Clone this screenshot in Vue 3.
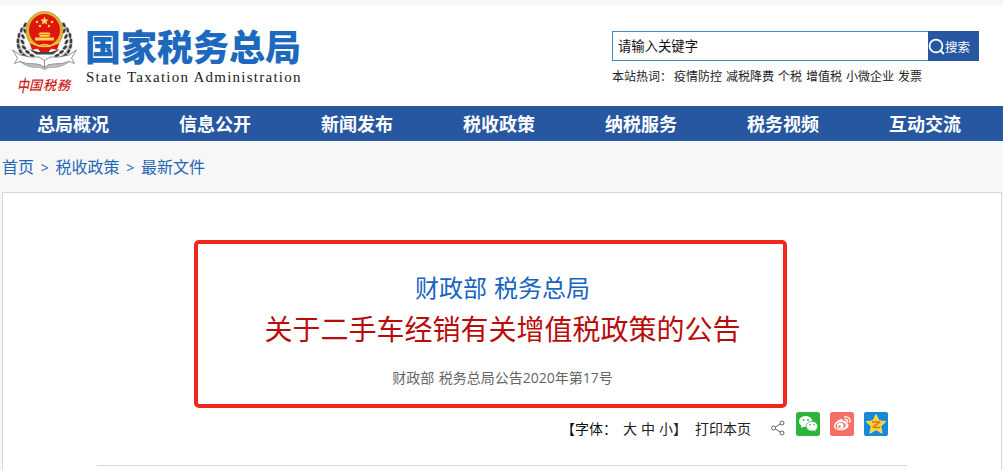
<script setup>
const hotWords = ['疫情防控', '减税降费', '个税', '增值税', '小微企业', '发票']
const navItems = ['总局概况', '信息公开', '新闻发布', '税收政策', '纳税服务', '税务视频', '互动交流']
const crumbs = ['首页', '税收政策', '最新文件']
// one side of the emblem's wheat wreath: x, y, rotation
const grains = [
  [16, 17, 25], [12.5, 22, 15], [10, 27.5, 5], [9, 33, 0], [9.5, 38.5, -15], [11.5, 43.5, -30], [15, 47.5, -45],
  [16, 23, -25], [14, 28.5, -30], [13.5, 34, -35], [15, 39.500, -45], [18.5, 44, -55], [23, 47.5, -65],
]
const sides = ['', 'translate(71 0) scale(-1 1)']
</script>

<template>
  <div class="page">
    <header class="header">
      <div class="brand">
        <svg class="emblem" viewBox="0 0 72 66" width="72" height="66">
          <g v-for="side in sides" :key="side" :transform="side">
            <path d="M17 16C7 27 8 41 18 48q6 5 15 6" fill="none" stroke="#666" stroke-width="1" />
            <ellipse v-for="(g, i) in grains" :key="i" rx="1.7" ry="3" fill="#3a3a3a" stroke="#eee" stroke-width=".6"
              :transform="`translate(${g[0]} ${g[1]}) rotate(${g[2]})`" />
            <path d="M3.500 42l7.500 5q11 3 19 2l5.500 3.500v7q-4-4-10-3.500-8 .5-15-2.500l-5 2 3-5.500z" fill="#fff" stroke="#777" stroke-width=".8" />
            <path d="M10.500 53.500q8 3 15 2.500 6-.5 10 3.500v2q-5-3-11-2-8-1-14-6z" fill="#bdbdbd" stroke="#888" stroke-width=".5" />
          </g>
          <ellipse cx="35.500" cy="23" rx="18.500" ry="19.500" fill="#dfb42c" stroke="#a97f22" stroke-width=".6" />
          <ellipse cx="35.500" cy="22" rx="15.500" ry="16" fill="#df1610" />
          <path d="M35.500 8.500l1.200 2.900 3.100.2-2.400 2 .8 3-2.700-1.600-2.700 1.600.8-3-2.400-2 3.100-.2z" fill="#ffe05a" />
          <g fill="#ffd84e">
            <circle cx="28" cy="14" r="1.200" /><circle cx="43" cy="14" r="1.200" />
            <circle cx="31" cy="18" r="1.200" /><circle cx="40" cy="18" r="1.200" />
            <path d="M31 24.500h9l2 2H29zM30.500 27h10v1.800h-10zM26 29.500h19v3H26z" />
          </g>
          <path d="M20 33q8 6 15.500 3Q43 39 51 33l-3 9-6-1.500-2.500 4h-8l-2.500-4-6 1.500z" fill="#df1610" />
          <path d="M20 33.500q15.500 10 31 0M29.500 38.500q6-4 12 0" fill="none" stroke="#f0c83a" stroke-width="1.600" />
          <path d="M20 41l7 5.500h17l7-5.500-9 3H29z" fill="#444" />
        </svg>
        <div class="script"><span>中</span><span>国</span><span>税</span><span>務</span></div>
      </div>
      <div class="names">
        <div class="name">国家税务总局</div>
        <div class="english">State Taxation Administration</div>
      </div>
      <div class="search">
        <div class="search-bar">
          <div class="search-input">请输入关键字</div>
          <div class="search-button">
            <svg width="17" height="18" viewBox="0 0 17 18"><circle cx="8" cy="9" r="6.400" fill="none" stroke="#fff" stroke-width="1.700" /><path d="M12.500 13.600l3.400 3.400" stroke="#fff" stroke-width="2" /></svg>
            <span>搜索</span>
          </div>
        </div>
        <div class="hot"><span class="hot-label">本站热词：</span><span v-for="w in hotWords" :key="w">{{ w }}</span></div>
      </div>
    </header>
    <nav class="nav"><span v-for="n in navItems" :key="n">{{ n }}</span></nav>
    <div class="crumbs">
      <template v-for="(c, i) in crumbs" :key="c"><span v-if="i" class="sep">&gt;</span><span>{{ c }}</span></template>
    </div>
    <main class="article">
      <div class="frame">
        <div class="issuer"><span>财政部</span><span>税务总局</span></div>
        <h1 class="title">关于二手车经销有关增值税政策的公告</h1>
        <div class="number">财政部 税务总局公告2020年第17号</div>
      </div>
      <div class="tools">
        <span class="label">【字体：</span>
        <span class="sizes"><span>大</span><span>中</span><span>小</span></span><span class="close">】</span>
        <span class="print">打印本页</span>
        <svg class="share" width="14" height="16" viewBox="0 0 14 16" fill="none" stroke="#666" stroke-width="1"><circle cx="2.600" cy="8" r="2" /><circle cx="11" cy="3" r="2" /><circle cx="11" cy="13" r="2" /><path d="M4.400 7l5-3M4.400 9l5 3" /></svg>
        <svg class="social" width="24" height="24" viewBox="0 0 24 24">
          <rect width="24" height="24" rx="2.500" fill="#2cb53b" />
          <path d="M9.700 4C5.900 4 3 6.400 3 9.500c0 1.800 1 3.300 2.500 4.300L5 16l2.500-1.300 2.200.3c3.700 0 6.600-2.400 6.600-5.500S13.400 4 9.700 4z" fill="#fff" />
          <path d="M16 9.300c-3.300 0-5.800 2.200-5.800 4.900s2.500 4.900 5.800 4.900l1.900-.3 2.200 1.200-.5-2c1.300-.9 2.100-2.200 2.100-3.800 0-2.700-2.500-4.900-5.700-4.900z" fill="#fff" stroke="#2cb53b" stroke-width=".7" />
          <g fill="#2cb53b"><circle cx="7.500" cy="8" r=".9" /><circle cx="12" cy="8" r=".9" /><circle cx="14.200" cy="12.800" r=".8" /><circle cx="18" cy="12.800" r=".8" /></g>
        </svg>
        <svg class="social" width="24" height="24" viewBox="0 0 24 24">
          <rect width="24" height="24" rx="2.500" fill="#f56f64" />
          <path d="M10.500 7.200c1.600-.6 2.800 0 2.300 2 2.500-.9 4.400-.3 3.700 1.700 3.100 1 2.400 4.200-.2 5.900-3.300 2.200-8.700 2-11.300-.2-3-2.600.9-7.900 5.500-9.400z" fill="#fff" />
          <ellipse cx="10.600" cy="13.700" rx="5.200" ry="3.400" fill="#f56f64" transform="rotate(-8 10.600 13.700)" />
          <ellipse cx="10.300" cy="13.900" rx="3.400" ry="2.800" fill="#fff" /><circle cx="9.500" cy="14.400" r="1.200" fill="#f56f64" />
          <path d="M14.600 5c3.900-.8 6.400 2.100 5.300 5.400M15 7.400c1.900-.3 3.100.9 2.600 2.600" fill="none" stroke="#fff" stroke-width="1.300" stroke-linecap="round" />
        </svg>
        <svg class="social" width="24" height="24" viewBox="0 0 24 24">
          <rect width="24" height="24" rx="2" fill="#1689d8" />
          <path d="M12 2.500l2.900 6.300 6.900.8-5.100 4.700 1.400 6.900-6.100-3.500-6.100 3.500 1.400-6.900-5.100-4.700 6.900-.8z" fill="#ffd02f" stroke="#ffdf58" stroke-width="1" stroke-linejoin="round" />
          <path d="M8 10.300q4-.8 7.700-.2L9.200 15.200q3.500.6 7 0" fill="none" stroke="#d37a12" stroke-width="1.500" stroke-linejoin="round" />
        </svg>
      </div>
      <div class="rule"></div>
    </main>
  </div>
</template>

<style>
body { background: #f7f7f7; overflow: hidden; }
</style>

<style scoped>
.page { width: 1003px; height: 470px; overflow: hidden; background: #f7f7f7; font-family: "Open Sans", "Noto Sans CJK SC", sans-serif; color: #222; display: flex; flex-direction: column; white-space: nowrap; }
.header { margin-top: 6px; height: 100px; flex: none; background: #fff; display: flex; box-sizing: border-box; }
.brand { width: 86px; display: flex; flex-direction: column; }
.emblem { margin: 2px 0 0 9px; flex: none; }
.script { margin: 0 0 0 17px; display: grid; grid-template-columns: 12px 14px 14px 15px; align-items: center; color: #d31c1c; font: italic 500 13px/22px "Noto Sans CJK SC", sans-serif; }
.script span:first-child { font-size: 17px; transform: scaleX(.7); transform-origin: left; }
.names { width: 526px; padding-top: 19px; box-sizing: border-box; }
.name { font: 900 36px/40px "Noto Sans CJK SC", sans-serif; color: #1e69be; margin-left: -1px; }
.english { font: 15px/18px "Liberation Serif", serif; letter-spacing: 1.250px; color: #222; margin-top: 3px; }
.search { padding-top: 25px; }
.search-bar { display: flex; height: 30px; }
.search-input { width: 316px; box-sizing: border-box; border: 1px solid #3c8cc9; border-right: 0; padding-left: 5px; font-size: 13.333px; line-height: 28px; color: #111; }
.search-button { width: 51px; background: #2857a2; color: #fff; display: flex; align-items: center; font-size: 12.500px; }
.hot { display: flex; gap: 4px; font-size: 12px; line-height: 18px; margin-top: 7px; }
.hot-label { width: 58px; }
.nav { height: 35px; flex: none; background: #2857a2; color: #fff; display: flex; padding-left: 2px; font-size: 18px; font-weight: 700; line-height: 36px; }
.nav span { width: 142px; flex: none; text-align: center; }
.crumbs { height: 51px; flex: none; padding-left: 2px; display: flex; font-size: 16px; line-height: 52px; color: #2566b4; }
.sep { width: 21.500px; text-align: center; font-size: 14px; line-height: 54px; }
.article { margin: 0 1px 0 2px; flex: 1; background: #fff; border: 1px solid #d9d9d9; border-bottom: 0; display: flex; flex-direction: column; }
.frame { width: 593px; height: 168px; flex: none; box-sizing: border-box; margin: 47px 0 0 191px; border: 4px solid #f0271b; border-radius: 5px; padding: 26px 0 0 24px; text-align: center; }
.issuer { display: flex; justify-content: center; gap: 7px; font-size: 24px; line-height: 36px; color: #1764c0; }
.title { margin: 1px 0 0; font-size: 28px; line-height: 44px; font-weight: 400; color: #b90d0d; }
.number { font-size: 14px; line-height: 20px; margin-top: 17px; color: #666; word-spacing: 1px; }
.tools { display: flex; height: 34px; margin: 4px 0 0 558px; font-size: 14px; line-height: 34px; }
.label { width: 62px; color: #111; }
.sizes { display: flex; gap: 4px; }
.close { width: 22px; }
.print { width: 76px; }
.share { margin: 8px 11px 0 0; flex: none; }
.social { margin-right: 10px; flex: none; }
.rule { margin: 19px 94px 0; height: 1px; background: #d8d8d8; }
</style>
